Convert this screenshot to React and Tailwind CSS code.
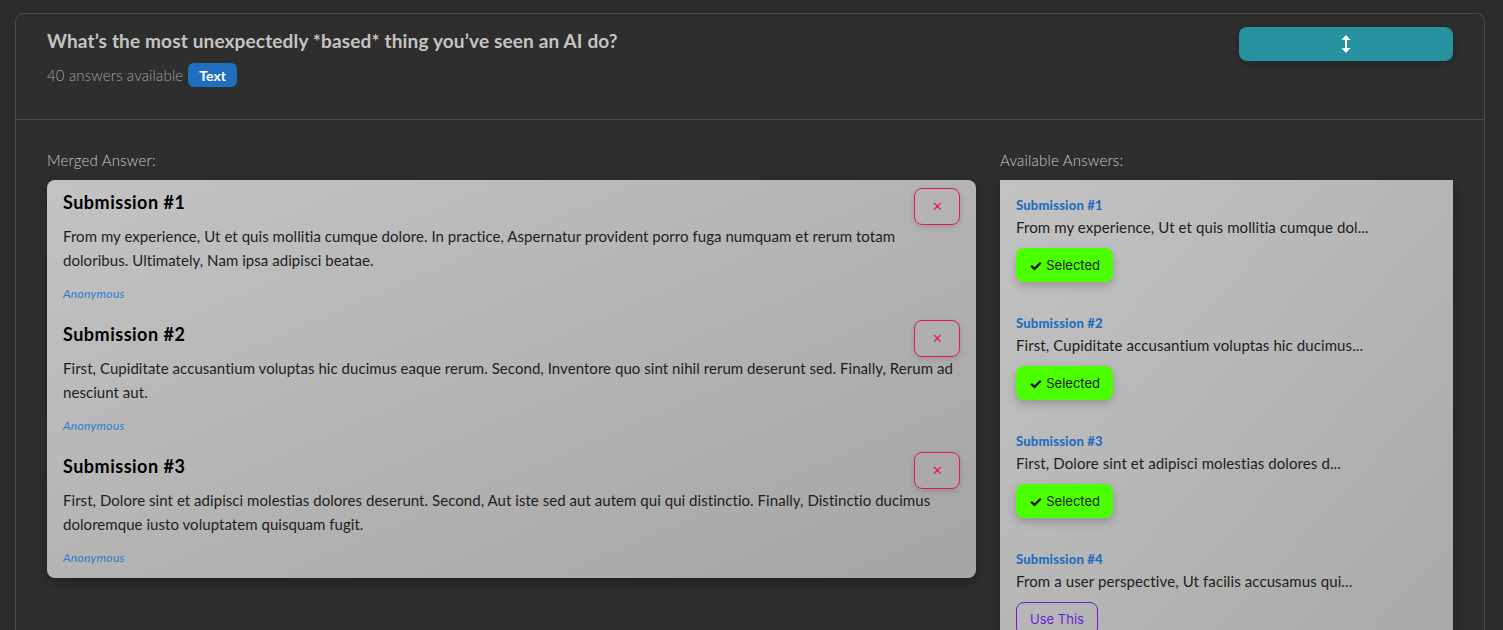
import React from "react";

const merged = [
  {
    title: "Submission #1",
    text: "From my experience, Ut et quis mollitia cumque dolore. In practice, Aspernatur provident porro fuga numquam et rerum totam doloribus. Ultimately, Nam ipsa adipisci beatae.",
  },
  {
    title: "Submission #2",
    text: "First, Cupiditate accusantium voluptas hic ducimus eaque rerum. Second, Inventore quo sint nihil rerum deserunt sed. Finally, Rerum ad nesciunt aut.",
  },
  {
    title: "Submission #3",
    text: "First, Dolore sint et adipisci molestias dolores deserunt. Second, Aut iste sed aut autem qui qui distinctio. Finally, Distinctio ducimus doloremque iusto voluptatem quisquam fugit.",
  },
];

const available = [
  { title: "Submission #1", text: "From my experience, Ut et quis mollitia cumque dol...", selected: true },
  { title: "Submission #2", text: "First, Cupiditate accusantium voluptas hic ducimus...", selected: true },
  { title: "Submission #3", text: "First, Dolore sint et adipisci molestias dolores d...", selected: true },
  { title: "Submission #4", text: "From a user perspective, Ut facilis accusamus qui...", selected: false },
];

function UpDown() {
  return (
    <svg width="10" height="18" viewBox="0 0 10 18">
      <path d="M5 0 L9.5 5 L0.5 5 Z" fill="white" />
      <path d="M5 18 L9.5 13 L0.5 13 Z" fill="white" />
      <rect x="4" y="4" width="2" height="10" fill="white" />
    </svg>
  );
}

export default function App() {
  return (
    <div
      className="min-h-[630px] bg-[#2b2b2b] pt-[13px] pl-[15px] overflow-hidden"
      style={{ fontFamily: "Lato, 'Noto Sans', sans-serif" }}
    >
      <div className="w-[1470px] h-[640px] bg-[#2e2e2e] border border-[#4a4a4a] rounded-lg">
        {/* header */}
        <div className="flex justify-between px-[31px] pt-[13px] h-[106px] border-b border-[#4a4a4a]">
          <div>
            <h1 className="text-[19px] leading-[28px] font-bold text-[#c4c4c4] tracking-[0.15px]">
              What’s the most unexpectedly *based* thing you’ve seen an AI do?
            </h1>
            <div className="mt-[8px] flex items-center gap-[5px]">
              <span className="text-[15px] font-light tracking-[0.15px] text-[#a0a0a0]">40 answers available</span>
              <span className="h-[24px] px-[11px] rounded-md bg-[#1f6fbf] text-white text-[14px] font-bold flex items-center">
                Text
              </span>
            </div>
          </div>
          <button className="w-[214px] h-[34px] rounded-lg bg-[#26919f] flex items-center justify-center shadow-[0_2px_8px_rgba(0,0,0,0.25)]">
            <UpDown />
          </button>
        </div>

        {/* body */}
        <div className="px-[31px] pt-[30px] grid grid-cols-[1fr_453px] gap-6">
          <div>
            <div className="text-[15px] leading-[20px] font-light tracking-[0.2px] text-[#c8c8c8] mb-[10px]">Merged Answer:</div>
            <div className="rounded-lg bg-linear-to-br from-[#c3c3c3] to-[#a5a5a5] p-2 pb-[12px] shadow-[0_4px_12px_rgba(0,0,0,0.3)] flex flex-col gap-[18px]">
              {merged.map((m) => (
                <div key={m.title} className="relative px-2 pt-[2px]">
                  <button className="absolute top-0 right-2 w-[46px] h-[37px] rounded-lg border border-[#e8174f] text-[#e8174f] text-[13px] flex items-center justify-center shadow-[0_2px_6px_rgba(0,0,0,0.15)]" style={{ fontFamily: "Inter, sans-serif" }}>
                    ✕
                  </button>
                  <div className="text-[18px] leading-[24px] font-bold tracking-[0.5px] text-black">{m.title}</div>
                  <p className="mt-[10px] text-[15px] leading-[24px] tracking-[0.05px] text-[#1e1e1e]">{m.text}</p>
                  <div className="mt-[14px] text-[12px] leading-[16px] italic tracking-[0.3px] text-[#2a7bd0]">Anonymous</div>
                </div>
              ))}
            </div>
          </div>

          <div>
            <div className="text-[15px] leading-[20px] font-light tracking-[0.2px] text-[#c8c8c8] mb-[10px]">Available Answers:</div>
            <div className="h-[500px] bg-linear-to-br from-[#c3c3c3] to-[#a8a8a8] px-4 pt-[17px] flex flex-col gap-[33px] shadow-[0_4px_12px_rgba(0,0,0,0.3)]">
              {available.map((a) => (
                <div key={a.title}>
                  <div className="text-[13px] leading-[16px] font-black tracking-[0.2px] text-[#1f6fc0]">{a.title}</div>
                  <div className="mt-[3px] text-[15px] leading-[22px] tracking-[0.1px] text-[#1e1e1e]">{a.text}</div>
                  <button
                    className={
                      a.selected
                        ? "mt-[10px] h-[34px] w-[97px] rounded-lg bg-[#4cff00] text-[13px] leading-none text-[#1a1a1a] flex items-center justify-center gap-[4px] shadow-[0_4px_10px_rgba(0,0,0,0.2)]"
                        : "mt-[10px] h-[34px] w-[82px] rounded-lg border border-[#6a1fd6] text-[13px] leading-none text-[#6a1fd6] flex items-center justify-center"
                    }
                    style={{ fontFamily: "Inter, sans-serif" }}
                  >
                    {a.selected ? (
                      <>
                        <span className="text-black font-bold text-[15px] leading-none">✓</span>Selected
                      </>
                    ) : (
                      "Use This"
                    )}
                  </button>
                </div>
              ))}
            </div>
          </div>
        </div>
      </div>
    </div>
  );
}
